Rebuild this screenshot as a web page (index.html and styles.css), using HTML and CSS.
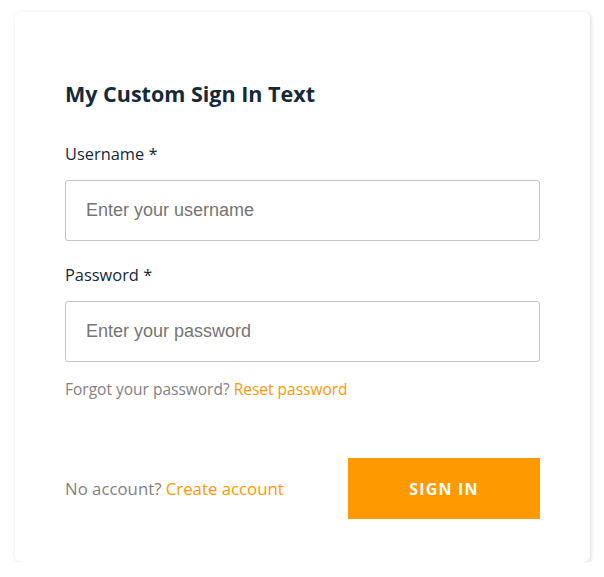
FILE: index.html
```html
<!DOCTYPE html>
<html lang="en">
<head>
  <meta charset="UTF-8" />
  <title>Sign In</title>
  <link rel="stylesheet" href="styles.css">
</head>
<body>

  <!-- Sign in card -->
  <div class="form-section">
    <h2 class="section-header">My Custom Sign In Text</h2>

    <div class="form-field">
      <label class="input-label" for="username">Username *</label>
      <input id="username" class="input" type="text" placeholder="Enter your username" />
    </div>

    <div class="form-field">
      <label class="input-label" for="password">Password *</label>
      <input id="password" class="input" type="password" placeholder="Enter your password" />
      <div class="hint">Forgot your password? <a href="#">Reset password</a></div>
    </div>

    <div class="section-footer">
      <span class="footer-text">No account? <a href="#">Create account</a></span>
      <button class="button" type="button">SIGN IN</button>
    </div>
  </div>

</body>
</html>
```

FILE: styles.css
```css
* {
  box-sizing: border-box;
}

body {
  margin: 0;
  padding: 12px 14px 0 15px;
  background: #fff;
  font-family: 'Open Sans', 'Noto Sans', sans-serif;
  color: #152939;
}

/* Card */
.form-section {
  width: 575px;
  padding: 70px 50px 43px;
  background: #fff;
  border-radius: 6px;
  box-shadow: 1px 1px 4px 0 rgba(0,0,0,0.15);
}

.section-header {
  margin: 0 0 38px;
  font-size: 21.5px;
  font-weight: 700;
  line-height: 24px;
  color: #152939;
}

.form-field {
  margin-bottom: 24px;
}

.input-label {
  display: block;
  margin-bottom: 16px;
  font-size: 16.4px;
  line-height: 20px;
  color: #152939;
}

.input {
  display: block;
  width: 100%;
  height: 61px;
  padding: 16px 20px;
  border: 1px solid #c4c4c4;
  border-radius: 3px;
  font-family: 'Liberation Sans', Arial, sans-serif;
  font-size: 18px;
  color: #152939;
  background: #fff;
}

.input::placeholder {
  color: #757575;
}

.hint {
  margin-top: 17px;
  font-size: 15.5px;
  line-height: 20px;
  color: #828282;
}

a {
  color: #ff9900;
  text-decoration: none;
}

/* Footer */
.section-footer {
  display: flex;
  align-items: center;
  justify-content: space-between;
  margin-top: 59px;
}

.footer-text {
  font-size: 16.8px;
  line-height: 20px;
  color: #828282;
}

.button {
  width: 192px;
  height: 61px;
  border: none;
  background: #ff9900;
  color: #fff;
  font-family: 'Open Sans', 'Noto Sans', sans-serif;
  font-size: 16px;
  font-weight: 700;
  letter-spacing: 1.2px;
  cursor: pointer;
}
```
